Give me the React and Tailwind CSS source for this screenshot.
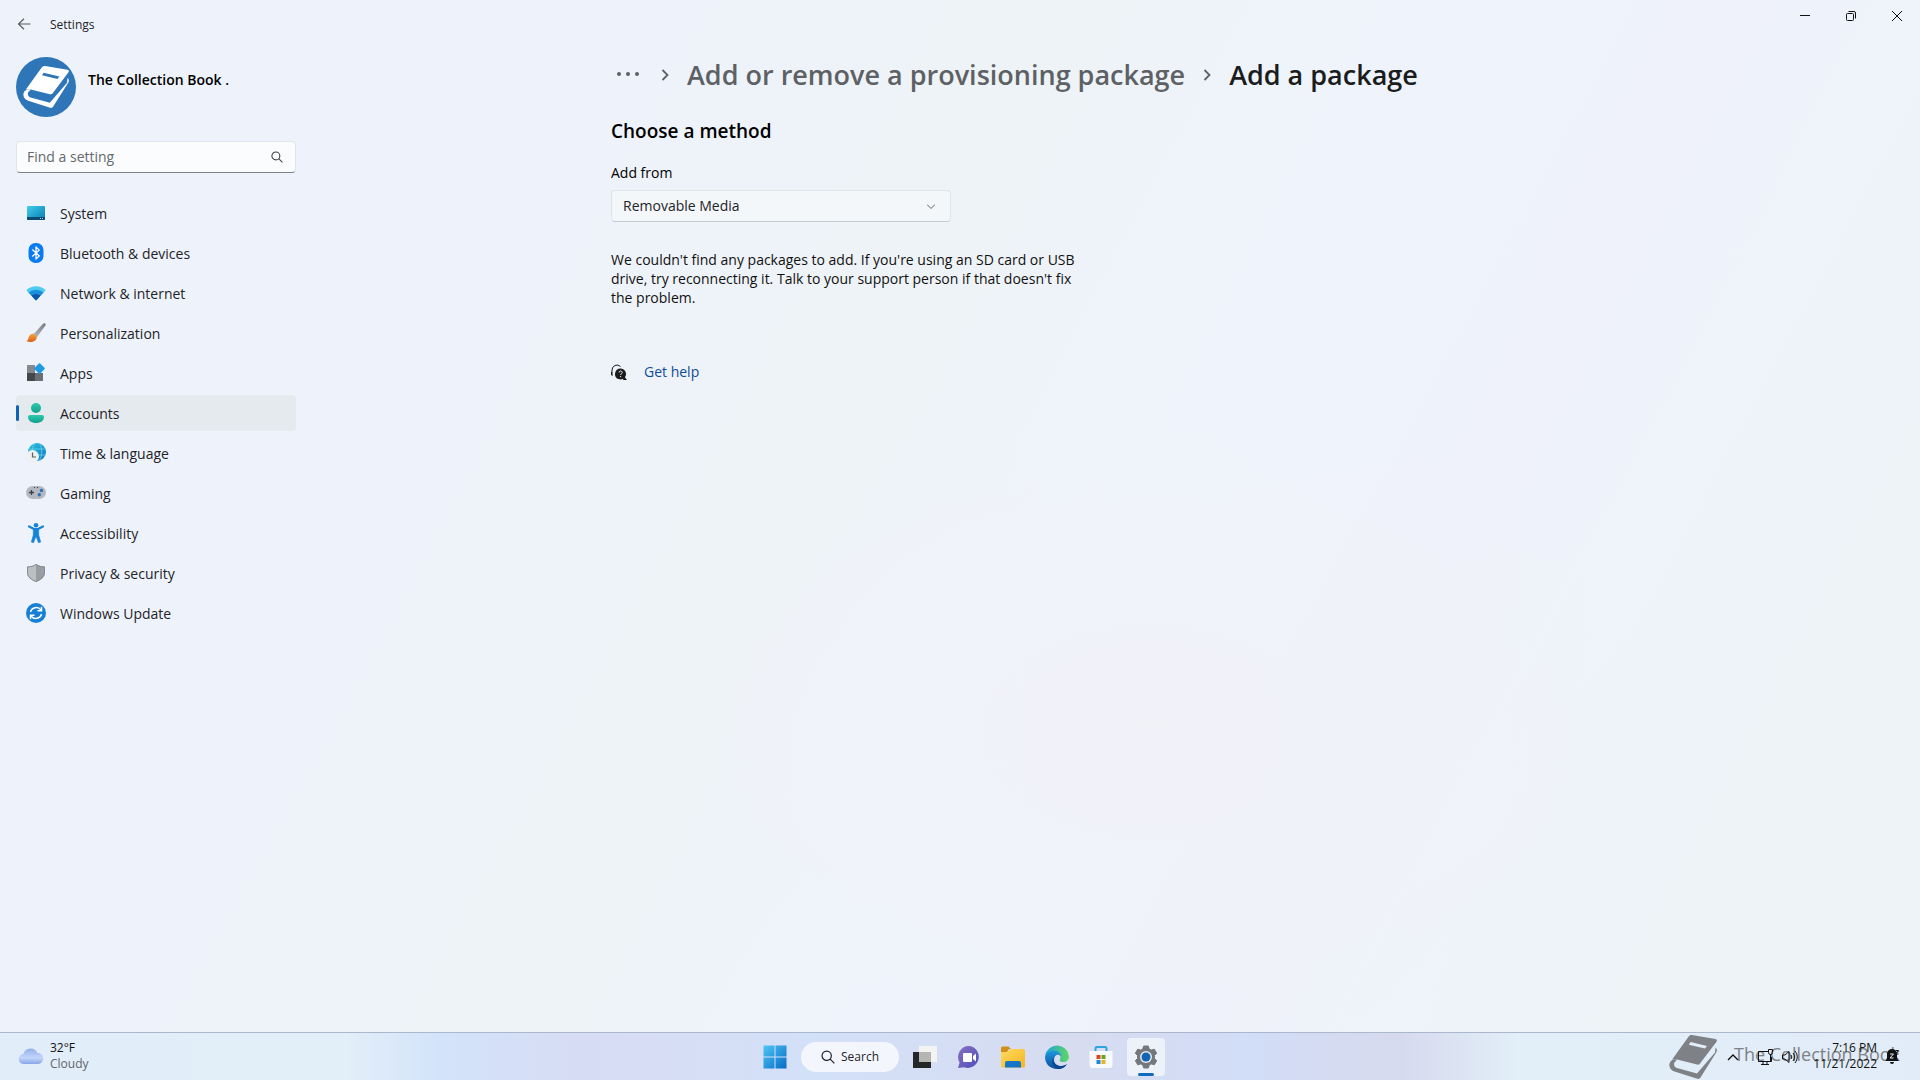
import React, { useState } from 'react';

const NAV_ITEMS = [
  { label: 'System', Icon: SystemIcon },
  { label: 'Bluetooth & devices', Icon: BluetoothIcon },
  { label: 'Network & internet', Icon: NetworkIcon },
  { label: 'Personalization', Icon: BrushIcon },
  { label: 'Apps', Icon: AppsIcon },
  { label: 'Accounts', Icon: AccountsIcon },
  { label: 'Time & language', Icon: TimeIcon },
  { label: 'Gaming', Icon: GamingIcon },
  { label: 'Accessibility', Icon: AccessibilityIcon },
  { label: 'Privacy & security', Icon: ShieldIcon },
  { label: 'Windows Update', Icon: UpdateIcon },
];

const TASKBAR_APPS = [
  { label: 'Task view', Icon: TaskViewIcon },
  { label: 'Chat', Icon: ChatIcon },
  { label: 'File Explorer', Icon: ExplorerIcon },
  { label: 'Microsoft Edge', Icon: EdgeIcon },
  { label: 'Microsoft Store', Icon: StoreIcon },
];

function SystemIcon() {
  return (
    <svg width="20" height="20" viewBox="0 0 20 20">
      <defs>
        <linearGradient id="sys" x1="0" y1="0" x2="1" y2="1">
          <stop offset="0" stopColor="#3fd0e6" />
          <stop offset="1" stopColor="#0a78b8" />
        </linearGradient>
      </defs>
      <rect x="1" y="3" width="18" height="14" rx="1" fill="url(#sys)" />
      <path d="M1 14h18v2a1 1 0 0 1-1 1H2a1 1 0 0 1-1-1z" fill="#0b4a72" />
      <path d="M14 15.5h1M16 15.5h1" stroke="#9fd8ee" />
    </svg>
  );
}

function BluetoothIcon() {
  return (
    <svg width="20" height="20" viewBox="0 0 20 20">
      <rect x="2.5" y="0" width="15" height="20" rx="7" fill="#0a7cf0" />
      <path d="M6.3 6.6l7 6.3L10 16V4l3.3 3.1-7 6.3" fill="none" stroke="#fff" strokeWidth="1.3" strokeLinejoin="round" />
    </svg>
  );
}

function NetworkIcon() {
  return (
    <svg width="20" height="20" viewBox="0 0 20 20">
      <path d="M.3 7.2a14 14 0 0 1 19.4 0L10.6 17a.8.8 0 0 1-1.2 0z" fill="#4ccbef" />
      <path d="M2.6 9.6a10.8 10.8 0 0 1 14.8 0L10.6 17a.8.8 0 0 1-1.2 0z" fill="#1a8fdc" />
      <path d="M5.4 12.6a7 7 0 0 1 9.2 0L10.6 17a.8.8 0 0 1-1.2 0z" fill="#0c57a8" />
    </svg>
  );
}

function BrushIcon() {
  return (
    <svg width="20" height="20" viewBox="0 0 20 20">
      <defs>
        <linearGradient id="handle" x1="1" y1="0" x2="0" y2="1">
          <stop offset="0" stopColor="#75787c" />
          <stop offset="1" stopColor="#b9bcc0" />
        </linearGradient>
        <linearGradient id="bristle" x1="0" y1="0" x2="0" y2="1">
          <stop offset="0" stopColor="#f9a53a" />
          <stop offset="1" stopColor="#d9601a" />
        </linearGradient>
      </defs>
      <path d="M19.3.5c.6.5.5 1.3.1 2L11 14l-3.6-2.8L17 .8c.7-.7 1.6-.8 2.3-.3z" fill="url(#handle)" />
      <path d="M7.4 10.6L11 13.8c-.3 3-2.5 5.2-5.5 5.2-2 0-3.7 0-5.2-.7 2-.8 1.7-2.3 2.5-4.3.8-2 2.5-3.3 4.6-3.4z" fill="url(#bristle)" />
    </svg>
  );
}

function AppsIcon() {
  return (
    <svg width="20" height="20" viewBox="0 0 20 20">
      <rect x="1" y="2" width="8" height="8" fill="#85898e" />
      <rect x="1" y="10" width="8" height="8" fill="#44484c" />
      <rect x="9" y="10" width="8" height="8" fill="#6b6f74" />
      <rect x="9.5" y="1.5" width="8" height="8" rx="1" transform="rotate(45 13.5 5.5)" fill="#1f9be4" />
    </svg>
  );
}

function AccountsIcon() {
  return (
    <svg width="20" height="20" viewBox="0 0 20 20">
      <defs>
        <linearGradient id="acc" x1="0" y1="0" x2="0" y2="1">
          <stop offset="0" stopColor="#2cc9ae" />
          <stop offset="1" stopColor="#12a08c" />
        </linearGradient>
      </defs>
      <circle cx="10" cy="5" r="5" fill="url(#acc)" />
      <path d="M4 12h12a2 2 0 0 1 2 2c0 3.8-3.5 6-8 6s-8-2.2-8-6a2 2 0 0 1 2-2z" fill="url(#acc)" />
    </svg>
  );
}

function TimeIcon() {
  return (
    <svg width="20" height="20" viewBox="0 0 20 20">
      <defs>
        <linearGradient id="globe" x1="0" y1="0" x2="1" y2="1">
          <stop offset="0" stopColor="#2fc4e0" />
          <stop offset="1" stopColor="#0f78c0" />
        </linearGradient>
      </defs>
      <circle cx="11" cy="9" r="9" fill="url(#globe)" />
      <path d="M3.2 6h15.6M3 12h16.5M8.5.5c-3 5-3 11 0 17M13.5.5c3 5 3 11 0 17" fill="none" stroke="#6fd8ee" strokeWidth=".7" />
      <circle cx="6.5" cy="13.5" r="6.5" fill="#eef0f1" />
      <path d="M6.5 9.5v4.5H10" fill="none" stroke="#5c6064" strokeWidth="1.2" />
    </svg>
  );
}

function GamingIcon() {
  return (
    <svg width="20" height="20" viewBox="0 0 20 20">
      <rect x="0" y="3" width="20" height="13" rx="6.5" fill="#b4b9c1" />
      <path d="M3 9.5h5M5.5 7v5" stroke="#3c4046" strokeWidth="1.3" />
      <path d="M8 4.5h1.2M11 4.5h1.2" stroke="#4a4e54" />
      <circle cx="15.5" cy="7.5" r="1.7" fill="#2f6fb5" />
      <circle cx="13.3" cy="11.7" r="1.7" fill="#2f6fb5" />
    </svg>
  );
}

function AccessibilityIcon() {
  return (
    <svg width="20" height="20" viewBox="0 0 20 20">
      <circle cx="10" cy="2.3" r="2.3" fill="#1583d8" />
      <path d="M3 3.5L8 6h4l5-2.5M10 6v6" fill="none" stroke="#1583d8" strokeWidth="2.2" strokeLinecap="round" />
      <path d="M7.3 5.5h5.4v6.5l2 7-2.2.8L10.3 14h-.6l-2.2 5.8-2.2-.8 2-7z" fill="#1583d8" stroke="#1583d8" strokeWidth=".6" strokeLinejoin="round" />
    </svg>
  );
}

function ShieldIcon() {
  return (
    <svg width="20" height="20" viewBox="0 0 20 20">
      <path d="M10 1c2.5 1.7 5.5 2.5 9 2.5V9c0 5-3.5 8-9 10z" fill="#9a9ea3" />
      <path d="M10 1C7.5 2.7 4.5 3.5 1 3.5V9c0 5 3.5 8 9 10z" fill="#bcbfc3" />
      <path d="M10 1.5C12.5 3.2 15.5 4 18.5 4v5c0 5-3.5 7.5-8.5 9.500C5 16.500 1.500 14 1.500 9V4c3 0 6-.8 8.500-2.500z" fill="none" stroke="#888c91" />
    </svg>
  );
}

function UpdateIcon() {
  return (
    <svg width="20" height="20" viewBox="0 0 20 20">
      <circle cx="10" cy="10" r="10" fill="#1780d4" />
      <path d="M4.5 9A5.8 5.8 0 0 1 15 7.2M15.5 11A5.8 5.8 0 0 1 5 12.8" fill="none" stroke="#fff" strokeWidth="1.5" />
      <path d="M15.5 3.8v4h-4M4.5 16.2v-4h4" fill="none" stroke="#fff" strokeWidth="1.5" />
    </svg>
  );
}

// Book logo, shared by the avatar and the badge in the tray
function BookIcon({ className }) {
  return (
    <svg className={className} viewBox="0 0 48 46" fill="currentColor">
      <path fillRule="evenodd" d="M23 1L46.5 5c1.6.3 1.8 1.5 1 2.7L31 29.5c-.8 1-1.6 1.4-2.9 1.1L6 25c-1.3 0-2.4.3-3.2.9L19.5 2.7C20.5 1.3 21.5.7 23 1zM21.5 8l-1.7 2.7L36 14.6 38 12z" />
      <path d="M46.5 13.5c1.7 1.5 1.9 3.2.7 5L31.5 43.5c-.8 1.3-1.8 1.7-3.2 1.3L5.5 37.5C.5 35.8-.8 31 1.6 27.5c.2 3.8 2.4 5.4 5.4 6.3L28 39.5 46 18.5z" />
      <path d="M1.6 27.5C3.5 25 6 25 8 25.5l-1.5 2C4.5 28.5 4.5 32 7 33.8l-3 1.2C.5 33 .2 30 1.6 27.5z" />
    </svg>
  );
}

function WindowsIcon() {
  return (
    <svg width="24" height="24" viewBox="0 0 24 24">
      <defs>
        <linearGradient id="win" x1="0" y1="0" x2="24" y2="24" gradientUnits="userSpaceOnUse">
          <stop offset="0" stopColor="#4fc9f5" />
          <stop offset="1" stopColor="#0768c4" />
        </linearGradient>
      </defs>
      <path d="M.5.5h11v11H.5zM12.5.5h11v11h-11zM.5 12.5h11v11H.5zM12.5 12.5h11v11h-11z" fill="url(#win)" />
    </svg>
  );
}

function TaskViewIcon() {
  return (
    <svg width="24" height="24" viewBox="0 0 24 24">
      <rect x="0" y="7" width="18" height="16" fill="#252627" />
      <rect x="6" y="1" width="18" height="16" fill="#f3f3f1" />
      <rect x="6" y="7" width="12" height="10" fill="#b5b5b4" />
    </svg>
  );
}

function ChatIcon() {
  return (
    <svg width="24" height="24" viewBox="0 0 24 24">
      <defs>
        <linearGradient id="chat" x1="0" y1="0" x2="1" y2="1">
          <stop offset="0" stopColor="#8a6fc0" />
          <stop offset="1" stopColor="#4d50bd" />
        </linearGradient>
      </defs>
      <path d="M12.5 1A11 11 0 1 1 7 22.2L1 23l1.6-5.5A11 11 0 0 1 12.5 1z" fill="url(#chat)" />
      <rect x="6" y="8" width="9" height="9" rx="1" fill="#fff" />
      <path d="M16 11l3-2.5v8L16 14z" fill="#fff" />
    </svg>
  );
}

function ExplorerIcon() {
  return (
    <svg width="24" height="24" viewBox="0 0 24 24">
      <defs>
        <linearGradient id="folder" x1="0" y1="0" x2="1" y2="1">
          <stop offset="0" stopColor="#fddb62" />
          <stop offset="1" stopColor="#f5b41c" />
        </linearGradient>
      </defs>
      <path d="M0 3a1.5 1.5 0 0 1 1.5-1.5h6L10 4h-2L6 7H0z" fill="#d08f17" />
      <path d="M0 7h6l4-3h12.5A1.5 1.5 0 0 1 24 5.5V21a1.5 1.5 0 0 1-1.5 1.5h-21A1.5 1.5 0 0 1 0 21z" fill="url(#folder)" />
      <path d="M4 22.5V18a2 2 0 0 1 2-2h12a2 2 0 0 1 2 2v4.5z" fill="#1476c4" />
    </svg>
  );
}

function EdgeIcon() {
  return (
    <svg width="24" height="24" viewBox="0 0 24 24">
      <defs>
        <linearGradient id="edgeTop" x1="0" y1="0" x2="1" y2="0">
          <stop offset="0" stopColor="#1f9fe0" />
          <stop offset="1" stopColor="#5fd860" />
        </linearGradient>
        <linearGradient id="edgeBody" x1="0" y1="0" x2="0" y2="1">
          <stop offset="0" stopColor="#1c97dc" />
          <stop offset="1" stopColor="#0c4f9e" />
        </linearGradient>
      </defs>
      <path d="M.2 10.5A12 12 0 0 1 24 11.5c0 3.5-2.5 5.5-5.5 5.5-2.5 0-4-1-4-1.8 0-.6 1-1 1-3C15.5 9 12 7.5 9 7.5c-4 0-7.5 1.5-8.8 3z" fill="url(#edgeTop)" />
      <path d="M.1 11.5C1 8 5 5.8 9 5.8c4 0 7 2.7 7 5.7-1-1.7-3-2.2-4.5-1.5-3 1.5-4 8 1.5 10.5 3 1.3 6.5.5 9-1.5a12 12 0 0 1-10 5C5 24-.5 18.5.1 11.5z" fill="url(#edgeBody)" />
      <path d="M9 11.5c-2 4 0 9 6 9.5 3 .2 5.5-.8 7-2-1.5 3-5 5-9 5-5-1-8-8-4-12.5z" fill="#0d4590" />
    </svg>
  );
}

function StoreIcon() {
  return (
    <svg width="24" height="24" viewBox="0 0 24 24">
      <path d="M6.5 7V3.5A1.5 1.5 0 0 1 8 2h8a1.5 1.5 0 0 1 1.5 1.5V7" fill="none" stroke="#2ea3dc" strokeWidth="2" />
      <path d="M.5 6h23v14a3 3 0 0 1-3 3h-17a3 3 0 0 1-3-3z" fill="#f8f9fa" />
      <path d="M7.5 10h4v4h-4z" fill="#d8452a" />
      <path d="M12.5 10h4v4h-4z" fill="#6fa41c" />
      <path d="M7.5 15h4v4h-4z" fill="#1a8ad6" />
      <path d="M12.5 15h4v4h-4z" fill="#eeb01c" />
    </svg>
  );
}

function GearIcon() {
  return (
    <svg width="24" height="24" viewBox="0 0 24 24">
      <path
        d="M9.6 1h4.8l.8 3 2 1.1 3.1-.9 2.4 4.1-2.2 2.2v3l2.2 2.2-2.4 4.1-3.1-.9-2 1.1-.8 3H9.6l-.8-3-2-1.1-3.1.9-2.4-4.1 2.2-2.2v-3L1.3 8.3l2.4-4.1 3.1.9 2-1.1z"
        fill="#74787d"
        stroke="#74787d"
        strokeLinejoin="round"
      />
      <circle cx="12" cy="12" r="6" fill="#e4ebf3" />
      <circle cx="12" cy="12" r="4.5" fill="#1264b0" />
    </svg>
  );
}

function CloudIcon() {
  return (
    <svg width="26" height="18" viewBox="0 0 26 18">
      <defs>
        <linearGradient id="cloud" x1="0" y1="0" x2="0" y2="1">
          <stop offset="0" stopColor="#94b0ea" />
          <stop offset=".6" stopColor="#c3d6fa" />
          <stop offset="1" stopColor="#86a6e8" />
        </linearGradient>
      </defs>
      <path d="M6 17a5 5 0 0 1-.6-10A7.5 7.5 0 0 1 19.5 6 5.5 5.5 0 0 1 20 17z" fill="url(#cloud)" />
    </svg>
  );
}

function SearchIcon({ className }) {
  return (
    <svg className={className} viewBox="0 0 16 16" fill="none" stroke="currentColor" strokeWidth="1.4">
      <circle cx="6.5" cy="6.5" r="5.3" />
      <path d="M10.2 10.2L15.3 15.3" />
    </svg>
  );
}

function ChevronRight() {
  return (
    <svg width="8" height="12" viewBox="0 0 8 12" fill="none" stroke="#5d6165" strokeWidth="1.8">
      <path d="M1.5 1L6.5 6l-5 5" />
    </svg>
  );
}

function HelpIcon() {
  return (
    <svg width="16" height="16" viewBox="0 0 16 16">
      <path d="M1 10.5V6a5 5 0 0 1 8.5-3.5M.5 8v3H2" fill="none" stroke="#1b1b1b" />
      <path d="M9.5 4.5a5.5 5.5 0 1 1-2 10.6 5.5 5.5 0 0 1 2-10.6zM13 12l3 4h-4z" fill="#1b1b1b" />
      <path d="M8 8.5c0-2 3.2-2 3.2 0 0 1.3-1.6 1.2-1.6 2.5M9.6 12v1.2" fill="none" stroke="#eef3f7" />
    </svg>
  );
}

function TitleBar() {
  return (
    <header className="flex h-12 items-start justify-between pl-[17px]">
      <div className="flex h-12 items-center gap-[19px]">
        <button aria-label="Back" className="text-[#5a5d61]">
          <svg width="14" height="12" viewBox="0 0 14 12" fill="none" stroke="currentColor" strokeWidth="1.2">
            <path d="M13.5 6H1.5M7 .7L1.5 6l5.5 5.3" />
          </svg>
        </button>
        <span className="pt-px text-[12px]">Settings</span>
      </div>
      <div className="flex">
        <button aria-label="Minimize" className="flex h-8 w-[46px] items-center justify-center">
          <svg width="10" height="10" viewBox="0 0 10 10" stroke="#111"><path d="M0 4.5h10" /></svg>
        </button>
        <button aria-label="Restore" className="flex h-8 w-[46px] items-center justify-center">
          <svg width="10" height="10" viewBox="0 0 10 10" fill="none" stroke="#111">
            <rect x=".5" y="2.5" width="7" height="7" rx="1" />
            <path d="M2.5.5H8A1.5 1.5 0 0 1 9.5 2v5.5" />
          </svg>
        </button>
        <button aria-label="Close" className="flex h-8 w-[46px] items-center justify-center">
          <svg width="10" height="10" viewBox="0 0 10 10" stroke="#111"><path d="M0 0l10 10M10 0L0 10" /></svg>
        </button>
      </div>
    </header>
  );
}

function Sidebar({ active, onSelect }) {
  const [query, setQuery] = useState('');

  return (
    <aside className="w-[302px] shrink-0 pt-2 pr-[6px] pl-4">
      <div className="flex h-[62px] items-start gap-3 pt-px">
        <div className="flex size-[60px] items-center justify-center rounded-full bg-[#2f76b9] text-white">
          <BookIcon className="h-11 w-12" />
        </div>
        <span className="pt-[13px] text-[14px] leading-5 font-[580] text-black">The Collection Book .</span>
      </div>

      <div className="mt-[23px] flex h-8 items-center rounded-sm border border-[#e0e5ea] border-b-[#7f8489] bg-[#fafcfe] pr-3 pl-[10px]">
        <input
          aria-label="Find a setting"
          placeholder="Find a setting"
          value={query}
          onChange={(e) => setQuery(e.target.value)}
          className="min-w-0 flex-1 bg-transparent pb-px text-[14px] outline-none placeholder:text-[#65696d]"
        />
        <SearchIcon className="size-3 text-[#3d4043]" />
      </div>

      <nav className="mt-[22px] flex flex-col gap-1">
        {NAV_ITEMS.map(({ label, Icon }) => (
          <button
            key={label}
            onClick={() => onSelect(label)}
            className={`flex h-9 items-center rounded-[4px] text-left text-[14px] ${active === label ? 'bg-[#e5eaee]' : ''}`}
          >
            <span className={`h-4 w-[3px] rounded-full ${active === label ? 'bg-[#0f63b5]' : ''}`} />
            <span className="ml-[7px] flex pb-px"><Icon /></span>
            <span className="ml-[14px]">{label}</span>
          </button>
        ))}
      </nav>
    </aside>
  );
}

function AddPackage() {
  const [source, setSource] = useState('Removable Media');

  return (
    <main className="min-w-0 flex-1">
      <div className="mx-auto max-w-[1000px] pt-2">
        <nav aria-label="Breadcrumb" className="flex h-[38px] items-center text-[27px] leading-9 font-[560]">
          <button aria-label="More" className="ml-[5px]">
            <svg width="24" height="6" viewBox="0 0 24 6" fill="#5d6165">
              <circle cx="3" cy="2" r="2" />
              <circle cx="12" cy="2" r="2" />
              <circle cx="21" cy="2" r="2" />
            </svg>
          </button>
          <span className="mr-[18px] ml-[21px]"><ChevronRight /></span>
          <a href="#provisioning" className="text-[#5d6165]">Add or remove a provisioning package</a>
          <span className="mx-[18px]"><ChevronRight /></span>
          <h1 className="text-[#1b1c1d]">Add a package</h1>
        </nav>

        <h2 className="mt-[23px] text-[19px] leading-7 font-semibold text-black">Choose a method</h2>

        <label htmlFor="source" className="mt-[18px] block text-[14px] leading-5 text-black">Add from</label>
        <div className="relative mt-[7px] w-[340px]">
          <select
            id="source"
            value={source}
            onChange={(e) => setSource(e.target.value)}
            className="h-8 w-full appearance-none rounded-[4px] border border-[#dfe4e9] border-b-[#c5cacf] bg-[#f3f7fa] pb-px pl-[11px] text-[14px]"
          >
            <option>Removable Media</option>
          </select>
          <svg className="pointer-events-none absolute top-[14px] right-4" width="8" height="5" viewBox="0 0 8 5" fill="none" stroke="#5d6165">
            <path d="M0 .5l4 4 4-4" />
          </svg>
        </div>

        <p className="mt-[28px] w-[464px] text-[14px] leading-[19px] text-[#111]">
          We couldn't find any packages to add. If you're using an SD card or USB drive, try reconnecting it. Talk to your support person if that doesn't fix the problem.
        </p>

        <a href="#help" className="mt-[55px] flex w-fit items-center gap-[17px] text-[14px] leading-5 text-[#0f4c96]">
          <HelpIcon />
          Get help
        </a>
      </div>
    </main>
  );
}

function Taskbar() {
  return (
    <footer className="relative flex h-12 items-center justify-between overflow-hidden border-t border-[#abb7cc] bg-[linear-gradient(90deg,#e1edf8_0%,#e2eef8_18%,#d3e3fa_23%,#d6dcf4_30%,#d6def5_36%,#d2e0f8_42%,#d7dcf0_56%,#d2ddf7_65%,#d6daee_73%,#e2eef8_79%,#e1ecf8_100%)]">
      <button className="flex items-center gap-[6px] pb-px pl-[18px] text-left text-[12px] leading-4">
        <CloudIcon />
        <span>
          <span className="block text-[#111]">32°F</span>
          <span className="block text-[#5f646b]">Cloudy</span>
        </span>
      </button>

      <div className="absolute inset-y-0 left-1/2 flex -translate-x-1/2 items-center gap-5 pl-2">
        <button aria-label="Start"><WindowsIcon /></button>
        <button className="-mx-[6px] flex h-[30px] w-[98px] items-center justify-center gap-[6px] rounded-full bg-[#f3f7fd] text-[12px]">
          <SearchIcon className="size-[14px]" />
          Search
        </button>
        {TASKBAR_APPS.map(({ label, Icon }) => (
          <button key={label} aria-label={label}><Icon /></button>
        ))}
        <button aria-label="Settings" className="relative -ml-[6px] flex size-[38px] items-center justify-center rounded-[4px] bg-[#edf1fa]">
          <GearIcon />
          <span className="absolute bottom-0 h-[3px] w-4 rounded-full bg-[#0f6cbd]" />
        </button>
      </div>

      <div className="absolute inset-y-0 right-5 flex items-center gap-4 pb-1 text-[#7e8286]">
        <BookIcon className="-mb-1 h-[46px] w-[50px]" />
        <span className="text-[18px]">The Collection Book</span>
      </div>

      <div className="relative flex items-center pr-5 text-[12px] leading-4 text-[#111]">
        <button aria-label="Hidden icons">
          <svg width="12" height="8" viewBox="0 0 12 8" fill="none" stroke="currentColor" strokeWidth="1.3"><path d="M1 7l5-5 5 5" /></svg>
        </button>
        <button aria-label="Network" className="ml-[18px]">
          <svg width="17" height="16" viewBox="0 0 17 16" fill="none" stroke="currentColor">
            <path d="M11 2.5H1.5v10h13V8M4 15.5h8M6 12.5v3M10 12.5v3M11.5.5h4v3a2 2 0 0 1-4 0zM13.5 5.5v7" />
          </svg>
        </button>
        <button aria-label="Volume" className="ml-2">
          <svg width="17" height="14" viewBox="0 0 17 14" fill="none" stroke="currentColor">
            <path d="M.5 5v4H3l4 3.5v-11L3 5zM9 5a3 3 0 0 1 0 4M11 3a6 6 0 0 1 0 8M13 1a9 9 0 0 1 0 12" />
          </svg>
        </button>
        <button className="ml-[14px] pb-px text-right">
          <span className="block">7:16 PM</span>
          <span className="block">11/21/2022</span>
        </button>
        <button aria-label="Notifications" className="ml-2">
          <svg width="15" height="16" viewBox="0 0 15 16">
            <path d="M7 0a5 5 0 0 1 5 5v4l1.5 3H.5L2 9V5a5 5 0 0 1 5-5zM5 13h4a2 2 0 0 1-4 0z" fill="currentColor" />
            <path d="M5 5h3.5L5 9h3.5" fill="none" stroke="#e2edf9" />
            <path d="M10.5 1.5h3L10.5 5h3" fill="none" stroke="currentColor" />
          </svg>
        </button>
      </div>
    </footer>
  );
}

export default function App() {
  const [active, setActive] = useState('Accounts');

  return (
    <div className="flex min-h-screen flex-col bg-[#eef3fb] bg-[radial-gradient(ellipse_at_60%_68%,#f1f2f8_0%,#f1f2f800_32%),linear-gradient(118deg,#eef3fb_28%,#eef3f7_42%,#eff3fb_56%,#eff2fb_70%,#eef3f8_86%,#eef3f7_100%)] font-['Open_Sans','Segoe_UI',sans-serif] text-[#1f2328]">
      <TitleBar />
      <div className="flex flex-1">
        <Sidebar active={active} onSelect={setActive} />
        <AddPackage />
      </div>
      <Taskbar />
    </div>
  );
}
